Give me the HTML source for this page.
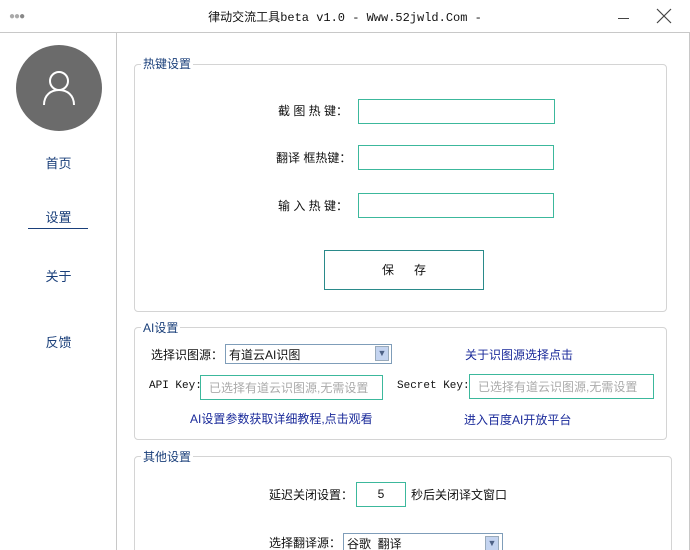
<!DOCTYPE html>
<html style="width:690px;height:550px;overflow:hidden"><head><meta charset="utf-8"><style>
*{margin:0;padding:0;box-sizing:border-box}
body{width:690px;height:550px;overflow:hidden;background:#fff;font-family:"Liberation Sans","Noto Sans CJK SC",sans-serif;font-size:12px;color:#111;position:relative}
.a{position:absolute}
.inp{position:absolute;border:1px solid #3cb89c;background:#fff}
.grp{position:absolute;border:1px solid #d4d4d4;border-radius:4px}
.lg{position:absolute;background:#fff;color:#1a3f7a;padding:0 2px;font-size:12px}
.menu{position:absolute;left:0;width:117px;text-align:center;color:#1a3f7a;font-size:13px}
.ph{color:#aaa;font-size:12px;padding:3px 8px;white-space:nowrap}
.lnk{position:absolute;color:#1a2a9a;font-size:12px}
.mono{font-family:"Liberation Mono",monospace}
</style></head><body>
<div class="a" style="left:9px;top:11px;color:#aaa;font-size:10px;letter-spacing:-1px">●●<span style="color:#888">●</span></div>
<div class="a" style="left:0;width:690px;top:8px;text-align:center;font-size:12px">律动交流工具<span class="mono">beta v1.0 - Www.52jwld.Com -</span></div>
<div class="a" style="left:618px;top:18px;width:11px;height:1px;background:#444"></div>
<svg class="a" style="left:656px;top:8px" width="16" height="16"><path d="M1 1L15 15M15 1L1 15" stroke="#444" stroke-width="1.2"/></svg>
<div class="a" style="left:116px;top:33px;width:1px;height:517px;background:#c8c8c8"></div>
<div class="a" style="left:689px;top:33px;width:1px;height:517px;background:#c8c8c8"></div>
<div class="a" style="left:0;top:32px;width:690px;height:1px;background:#c8c8c8"></div>
<div class="a" style="left:16px;top:45px;width:86px;height:86px;border-radius:50%;background:#6b6b6b"></div>
<svg class="a" style="left:38px;top:67px" width="42" height="42"><circle cx="21" cy="14" r="9" fill="none" stroke="#fff" stroke-width="2"/><path d="M6 38C6 28 13 23 21 23C29 23 36 28 36 38" fill="none" stroke="#fff" stroke-width="2"/></svg>
<div class="menu" style="top:153px">首页</div>
<div class="menu" style="top:207px">设置</div>
<div class="a" style="left:28px;top:228px;width:60px;height:1px;background:#1a3f7a"></div>
<div class="menu" style="top:266px">关于</div>
<div class="menu" style="top:332px">反馈</div>

<div class="grp" style="left:134px;top:64px;width:533px;height:248px"></div>
<div class="lg" style="left:141px;top:55px">热键设置</div>
<div class="a" style="left:278px;top:102px">截 图 热 键：</div>
<div class="inp" style="left:358px;top:99px;width:197px;height:25px"></div>
<div class="a" style="left:276px;top:149px">翻译 框热键：</div>
<div class="inp" style="left:358px;top:145px;width:196px;height:25px;border-color:#3cb89c"></div>
<div class="a" style="left:278px;top:197px">输 入 热 键：</div>
<div class="inp" style="left:358px;top:193px;width:196px;height:25px;border-color:#3cb89c"></div>
<div class="inp" style="left:324px;top:250px;width:160px;height:40px;border-color:#2a8a8a;text-align:center;line-height:38px">保&nbsp;&nbsp;&nbsp;&nbsp;&nbsp;&nbsp;存</div>

<div class="grp" style="left:134px;top:327px;width:533px;height:113px"></div>
<div class="lg" style="left:141px;top:319px">AI设置</div>
<div class="a" style="left:151px;top:346px">选择识图源：</div>
<div class="a" style="left:225px;top:344px;width:167px;height:20px;border:1px solid #7f9db9;padding:1px 3px">有道云AI识图</div>
<div class="a" style="left:375px;top:346px;width:14px;height:15px;background:#c4d4f0;border:1px solid #9ab;color:#4d6185;font-size:9px;text-align:center;line-height:13px">▼</div>
<div class="lnk" style="left:465px;top:346px">关于识图源选择点击</div>
<div class="a mono" style="left:149px;top:380px;font-size:11px">API Key:</div>
<div class="inp ph" style="left:200px;top:375px;width:183px;height:25px">已选择有道云识图源,无需设置</div>
<div class="a mono" style="left:397px;top:380px;font-size:11px">Secret Key:</div>
<div class="inp ph" style="left:469px;top:374px;width:185px;height:25px">已选择有道云识图源,无需设置</div>
<div class="lnk" style="left:190px;top:410px">AI设置参数获取详细教程,点击观看</div>
<div class="lnk" style="left:464px;top:411px">进入百度AI开放平台</div>

<div class="grp" style="left:134px;top:456px;width:538px;height:120px"></div>
<div class="lg" style="left:141px;top:448px">其他设置</div>
<div class="a" style="left:269px;top:486px">延迟关闭设置：</div>
<div class="inp" style="left:356px;top:482px;width:50px;height:25px;text-align:center;line-height:23px">5</div>
<div class="a" style="left:411px;top:486px">秒后关闭译文窗口</div>
<div class="a" style="left:269px;top:534px">选择翻译源：</div>
<div class="a" style="left:343px;top:533px;width:160px;height:22px;border:1px solid #7f9db9;padding:1px 3px">谷歌&nbsp;&nbsp;翻译</div>
<div class="a" style="left:485px;top:536px;width:14px;height:15px;background:#c4d4f0;border:1px solid #9ab;color:#4d6185;font-size:9px;text-align:center;line-height:13px">▼</div>
</body></html>
